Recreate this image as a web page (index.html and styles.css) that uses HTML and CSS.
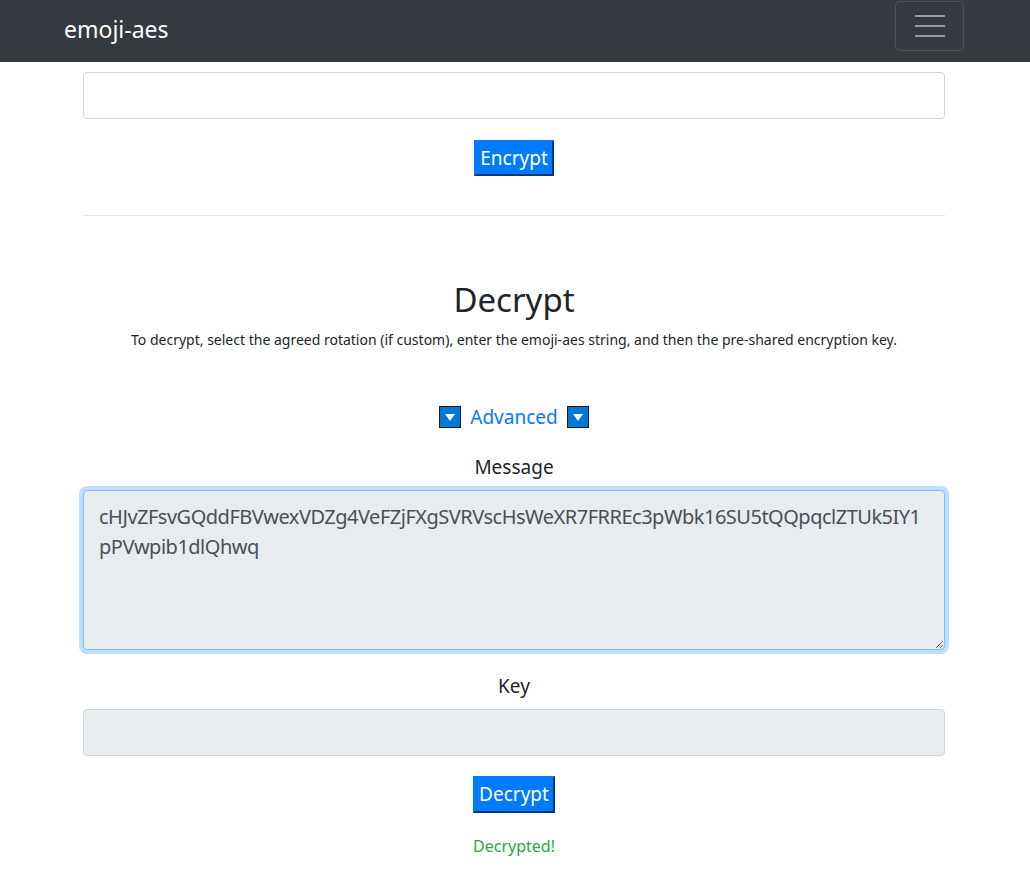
FILE: index.html
```html
<!DOCTYPE html>
<html lang="en">
<head>
<meta charset="utf-8">
<title>emoji-aes</title>
<link rel="stylesheet" href="styles.css">
</head>
<body>
<nav class="navbar">
  <a class="brand" href="#">emoji-aes</a>
  <button class="toggler" type="button" aria-label="Toggle navigation">
    <span class="bar"></span><span class="bar"></span><span class="bar"></span>
  </button>
</nav>
<main class="container">
  <input class="form-control" type="text">
  <div class="center encrypt-row">
    <button class="btn" type="button">Encrypt</button>
  </div>
  <hr class="divider">
  <section class="decrypt">
    <h2 class="title">Decrypt</h2>
    <p class="lead">To decrypt, select the agreed rotation (if custom), enter the emoji-aes string, and then the pre-shared encryption key.</p>
    <div class="advanced">
      <span class="arrow-box"><svg viewBox="0 0 22 22" width="22" height="22"><rect x="0.5" y="0.5" width="21" height="21" fill="#0078d7" stroke="#1a1a1a"/><polygon points="6,8 16,8 11,15" fill="#fff"/></svg></span>
      <a class="adv-link" href="#">Advanced</a>
      <span class="arrow-box"><svg viewBox="0 0 22 22" width="22" height="22"><rect x="0.5" y="0.5" width="21" height="21" fill="#0078d7" stroke="#1a1a1a"/><polygon points="6,8 16,8 11,15" fill="#fff"/></svg></span>
    </div>
    <label class="label">Message</label>
    <textarea class="form-control message" readonly>cHJvZFsvGQddFBVwexVDZg4VeFZjFXgSVRVscHsWeXR7FRREc3pWbk16SU5tQQpqclZTUk5IY1pPVwpib1dlQhwq</textarea>
    <label class="label key-label">Key</label>
    <input class="form-control filled" type="password" readonly>
    <div class="center decrypt-row">
      <button class="btn btn-tall" type="button">Decrypt</button>
    </div>
    <p class="success">Decrypted!</p>
  </section>
</main>
</body>
</html>
```
FILE: styles.css
```css
* { box-sizing: border-box; }
body {
  margin: 0;
  font-family: "Noto Sans", "Open Sans", sans-serif;
  color: #212529;
  background: #fff;
}
.navbar {
  height: 62px;
  background: #343a40;
  display: flex;
  align-items: center;
  justify-content: space-between;
  padding: 0 66px 0 64px;
}
.brand {
  color: #fff;
  text-decoration: none;
  font-size: 23px;
  margin-top: -4px;
}
.toggler {
  width: 69px;
  height: 50px;
  margin-top: -10px;
  background: transparent;
  border: 1px solid rgba(255,255,255,.12);
  border-radius: 5px;
  display: flex;
  flex-direction: column;
  align-items: center;
  justify-content: center;
  gap: 8px;
  padding: 0;
}
.toggler .bar {
  display: block;
  width: 30px;
  height: 2px;
  background: rgba(255,255,255,.5);
}
.container {
  width: 862px;
  margin-left: calc(50% - 432px);
  padding-top: 10px;
}
.form-control {
  display: block;
  width: 100%;
  height: 47px;
  padding: 8px 15px;
  font-family: inherit;
  font-size: 20px;
  line-height: 30px;
  color: #495057;
  background: #fff;
  border: 1px solid #ced4da;
  border-radius: 4px;
  outline: none;
}
.center { display: flex; justify-content: center; }
.encrypt-row { margin-top: 21px; }
.btn {
  font-family: inherit;
  font-size: 19px;
  line-height: 26px;
  color: #fff;
  background: #007bff;
  border: 2px outset #0062cc;
  border-top-color: #007bff;
  border-left-color: #007bff;
  padding: 3px 4px 3px;
  cursor: pointer;
}
.btn-tall { padding-bottom: 4px; }
.divider {
  margin: 39px 0 0;
  border: 0;
  border-top: 1px solid #e5e5e5;
}
.decrypt { text-align: center; }
.title {
  margin: 61px 0 0;
  font-size: 33px;
  font-weight: 400;
  line-height: 46px;
}
.lead {
  margin: 7px 0 0;
  font-size: 14px;
  line-height: 20px;
}
.advanced {
  margin-top: 53px;
  display: flex;
  justify-content: center;
  align-items: center;
  gap: 9px;
}
.arrow-box { display: block; width: 22px; height: 22px; }
.arrow-box svg { display: block; }
.adv-link {
  color: #007bff;
  text-decoration: none;
  font-size: 19px;
  line-height: 28px;
}
.label {
  display: block;
  margin-top: 22px;
  font-size: 19px;
  line-height: 28px;
}
.message {
  margin-top: 9px;
  height: 160px;
  padding: 11px 15px 8px;
  background: #e9ecef;
  border-color: #80bdff;
  box-shadow: 0 0 0 4px rgba(0,123,255,.25);
  resize: vertical;
  text-align: left;
  letter-spacing: -0.5px;
  overflow-wrap: break-word;
  word-break: break-all;
}
.key-label { margin-top: 22px; }
.filled {
  margin-top: 9px;
  background: #e9ecef;
}
.decrypt-row { margin-top: 20px; }
.success {
  margin: 21px 0 0;
  color: #28a745;
  font-size: 16px;
  line-height: 24px;
}
```
